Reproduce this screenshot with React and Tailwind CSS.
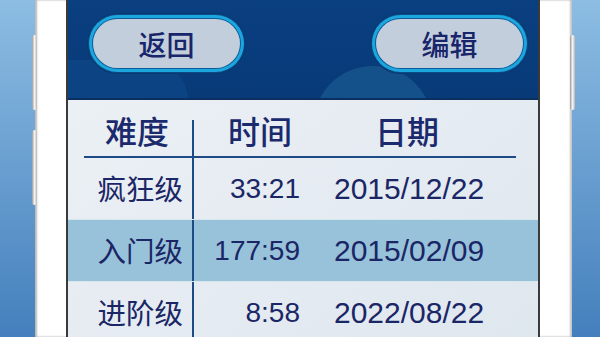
import React from 'react'

const rows = [
    { level: "疯狂级", time: "33:21", date: "2015/12/22", hi: false },
    { level: "入门级", time: "177:59", date: "2015/02/09", hi: true },
    { level: "进阶级", time: "8:58", date: "2022/08/22", hi: false },
]

const cjk = "font-['Noto_Sans_CJK_SC',sans-serif]"
const num = "font-['Liberation_Sans','Noto_Sans_CJK_SC',sans-serif]"

const Pill = ({ label }) => (
    <div className="w-[157px] h-[59px] rounded-full bg-[#0b4a88] p-[1px] shadow-[0_0_0_1px_#0a3a70]">
        <div className="w-full h-full rounded-full bg-[#1ca6de] p-[3px]">
            <div className="w-full h-full rounded-full bg-[#0d5c98] p-[1px]">
                <div className={`w-full h-full rounded-full bg-[#c3cedd] flex items-center justify-center text-[28px] font-medium text-[#18256a] ${cjk}`}>
                    {label}
                </div>
            </div>
        </div>
    </div>
)

const SideKey = ({ className }) => (
    <div className={`absolute w-[5px] rounded-sm bg-gradient-to-r from-[#9a9a9a] via-[#f4f4f4] to-[#b8b8b8] ${className}`} />
)

export default () => {
    return (
        <div className="w-[600px] h-[337px] overflow-hidden bg-gradient-to-b from-[#8dbde2] to-[#4480bd] flex pl-[35px]">
            <div className="relative w-[537px] h-full bg-white pl-[31px] pr-[32px] shadow-[inset_2px_0_2px_#b9b9b9,inset_-2px_0_2px_#c4c4c4]">
                <SideKey className="-left-[3px] top-[35px] h-[75px]" />
                <SideKey className="-left-[3px] top-[130px] h-[75px]" />
                <SideKey className="-right-[3px] top-[35px] h-[75px]" />

                <div className="h-full border-x-2 border-[#3a3a3a] flex flex-col bg-gradient-to-br from-[#eef2f6] via-[#e6ecf2] to-[#dfe7ef]">
                    {/* header */}
                    <div className="relative h-[100px] shrink-0 overflow-hidden bg-gradient-to-b from-[#0a3f80] to-[#083a78] border-b-2 border-[#0a2f60] flex items-start justify-between pl-[20px] pr-[10px] pt-[14px]">
                        <div className="absolute left-[245px] top-[66px] w-[120px] h-[120px] rounded-full bg-[#1a5a90] opacity-70" />
                        <div className="absolute -left-[40px] top-[60px] w-[160px] h-[80px] rounded-full bg-[#0f4a8a] opacity-60" />
                        <div className="relative"><Pill label="返回" /></div>
                        <div className="relative"><Pill label="编辑" /></div>
                    </div>

                    {/* table head */}
                    <div className="flex h-[58px] shrink-0 ml-[16px] mr-[22px] border-b-2 border-[#1d4b86] text-[32px] font-medium text-[#1a2a6c]">
                        <div className={`w-[108px] flex items-end justify-center pb-[2px] pr-[2px] ${cjk}`}>难度</div>
                        <div className="w-[2px] mt-[20px] bg-[#1d4b86]" />
                        <div className={`w-[34px]`} />
                        <div className={`w-[72px] flex items-end pb-[2px] ${cjk}`}>时间</div>
                        <div className={`flex-1 flex items-end pb-[2px] pl-[75px] ${cjk}`}>日期</div>
                    </div>

                    {/* rows */}
                    {rows.map((r, i) => (
                        <div key={i} className={`flex shrink-0 ${i === 1 ? "h-[63px]" : "h-[61px]"} ${r.hi ? "bg-[#98c2d9] border-y border-[#d8e6ee]" : ""} text-[#1a2666]`}>
                            <div className={`w-[124px] flex items-center justify-end pr-[9px] text-[28.5px] ${cjk}`}>{r.level}</div>
                            <div className="w-[2px] bg-[#1d4b86]" />
                            <div className={`w-[106px] flex items-center justify-end text-[28px] ${num}`}>{r.time}</div>
                            <div className={`flex-1 flex items-center pl-[34px] text-[30px] ${num}`}>{r.date}</div>
                        </div>
                    ))}
                </div>
            </div>
        </div>
    )
}
